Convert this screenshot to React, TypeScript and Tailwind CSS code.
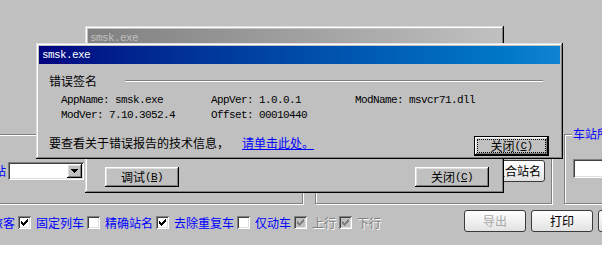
import type { ReactNode } from "react";

const CJK = "font-['Noto_Sans_CJK_SC',sans-serif]";
const MONO = "font-['Liberation_Mono',monospace] text-[11px] tracking-[-0.6px]";
const RAISED = "shadow-[inset_-1px_-1px_0_#000,inset_1px_1px_0_#fff,inset_-2px_-2px_0_#808080,inset_2px_2px_0_#dfdfdf]";
const SUNKEN = "shadow-[inset_1px_1px_0_#808080,inset_-1px_-1px_0_#fff,inset_2px_2px_0_#404040,inset_-2px_-2px_0_#dfdfdf]";
const FRAME = "shadow-[inset_-1px_-1px_0_#000,inset_1px_1px_0_#dfdfdf,inset_-2px_-2px_0_#808080,inset_2px_2px_0_#fff]";
const ETCHED = "border border-[#808080] shadow-[inset_1px_1px_0_#fff,1px_1px_0_#fff]";

// classic 7x7 check glyph, one 3px column per x
function Tick({ color }: { color: string }) {
  const tops = [2, 3, 4, 3, 2, 1, 0];
  return (
    <svg width="7" height="7" viewBox="0 0 7 7" shapeRendering="crispEdges">
      {tops.map((y, x) => (
        <rect key={x} x={x} y={y} width="1" height="3" fill={color} />
      ))}
    </svg>
  );
}

function Check({ checked, disabled }: { checked?: boolean; disabled?: boolean }) {
  return (
    <span
      className={`flex h-[13px] w-[13px] shrink-0 items-center justify-center ${SUNKEN} ${
        disabled ? "bg-[#c0c0c0]" : "bg-white"
      }`}
    >
      {checked && <Tick color={disabled ? "#808080" : "#000"} />}
    </span>
  );
}

function Hotkey({ cn, k }: { cn: string; k: string }) {
  return (
    <span className="flex items-center whitespace-nowrap">
      <span className="leading-[12px]">{cn}</span>
      <span className={MONO}>
        (<span className="underline">{k}</span>)
      </span>
    </span>
  );
}

function WinButton({ children }: { children: ReactNode }) {
  return (
    <div className={`flex h-[20px] w-[74px] items-center justify-center bg-[#c0c0c0] ${RAISED}`}>
      {children}
    </div>
  );
}

function XpButton({ children, dim }: { children: ReactNode; dim?: boolean }) {
  return (
    <div
      className={`flex h-[22px] w-[62px] shrink-0 items-center justify-center rounded-[3px] border border-[#3a3a3a] bg-linear-to-b from-white to-[#e2e2e2] ${
        dim ? "text-[#a8a8a8]" : "text-black"
      }`}
    >
      {children}
    </div>
  );
}

const OPTIONS = [
  { label: "旅客", checked: true },
  { label: "固定列车", checked: true },
  { label: "精确站名", checked: false },
  { label: "去除重复车", checked: true },
  { label: "仅动车", checked: false },
  { label: "上行", checked: true, disabled: true },
  { label: "下行", checked: true, disabled: true },
];

export default function App() {
  return (
    <div className={`relative h-[271px] w-[602px] overflow-hidden bg-white text-[12px] leading-[14px] text-black ${CJK}`}>
      {/* query window underneath */}
      <div className="flex h-[245px] flex-col bg-[#c0c0c0] pt-[134px]">
        <div className="flex h-[70px]">
          <div className={`-ml-[10px] flex w-[313px] shrink-0 items-start ${ETCHED}`}>
            <div className="mt-[27px] flex items-center">
              <span className="-ml-[9px] leading-[18px] text-[#0000ff]">到站</span>
              <div className={`ml-[2px] flex h-[18px] w-[76px] justify-end bg-white p-[2px] ${SUNKEN}`}>
                <div className={`flex h-[14px] w-[15px] items-center justify-center bg-[#c0c0c0] ${RAISED}`}>
                  <svg width="7" height="4" viewBox="0 0 7 4" shapeRendering="crispEdges">
                    <path d="M0 0h7v1H0zM1 1h5v1H1zM2 2h3v1H2zM3 3h1v1H3z" fill="#000" />
                  </svg>
                </div>
              </div>
            </div>
          </div>

          <div className={`ml-[12px] flex w-[237px] shrink-0 items-start justify-end pr-[6px] ${ETCHED}`}>
            <div className="mt-[25px] flex h-[22px] w-[70px] items-center justify-end rounded-[3px] border border-[#3a3a3a] bg-linear-to-b from-white to-[#e2e2e2] pr-[3px]">
              组合站名
            </div>
          </div>

          <div className={`ml-[12px] flex w-[60px] shrink-0 flex-col items-start ${ETCHED}`}>
            <span className="-mt-[8px] ml-[7px] whitespace-nowrap bg-[#c0c0c0] px-[1px] leading-[14px] text-[#0000ff]">
              车站所属局
            </span>
            <div className={`ml-[8px] mt-[18px] h-[19px] w-[60px] shrink-0 bg-white ${SUNKEN}`} />
          </div>
        </div>

        <div className="mt-[6px] flex h-[22px] items-start">
          <div className="-ml-[27px] mt-[6px] flex shrink-0 items-center">
            {OPTIONS.map((o, i) => (
              <div key={o.label} className={`flex items-center ${i > 0 ? "ml-[3px]" : ""}`}>
                <Check checked={o.checked} disabled={o.disabled} />
                <span
                  className={`ml-[5px] whitespace-nowrap leading-[13px] ${
                    o.disabled ? "text-[#808080] [text-shadow:1px_1px_0_#fff]" : "text-[#0000ff]"
                  }`}
                >
                  {o.label}
                </span>
              </div>
            ))}
          </div>
          <div className="ml-[83px] flex shrink-0 gap-[5px]">
            <XpButton dim>导出</XpButton>
            <XpButton>打印</XpButton>
            <XpButton>退出</XpButton>
          </div>
        </div>
      </div>

      {/* inactive error window behind */}
      <div className={`absolute left-[85px] top-[26px] flex h-[167px] w-[419px] flex-col bg-[#c0c0c0] p-[3px] ${FRAME}`}>
        <div className="flex h-[18px] items-center bg-linear-to-r from-[#808080] to-[#c0c0c0] pl-[2px]">
          <span className={`${MONO} text-[#c0c0c0]`}>smsk.exe</span>
        </div>
        <div className="flex-1" />
        <div className="flex justify-between pb-[3px] pl-[17px] pr-[12px]">
          <WinButton>
            <Hotkey cn="调试" k="B" />
          </WinButton>
          <WinButton>
            <Hotkey cn="关闭" k="C" />
          </WinButton>
        </div>
      </div>

      {/* active error window */}
      <div className={`absolute left-[36px] top-[43px] flex h-[116px] w-[527px] flex-col bg-[#c0c0c0] p-[3px] ${FRAME}`}>
        <div className="flex h-[18px] shrink-0 items-center bg-linear-to-r from-[#000080] to-[#1084d0] pl-[3px]">
          <span className={`${MONO} text-white`}>smsk.exe</span>
        </div>

        <div className="mt-[11px] flex h-[12px] items-center pl-[10px] pr-[17px]">
          <span className="leading-[12px]">错误签名</span>
          <div className="ml-[28px] h-[2px] flex-1 border-t border-b border-t-[#808080] border-b-white" />
        </div>

        <div className={`mt-[6px] grid grid-cols-[150px_144px_auto] pl-[22px] leading-[15px] ${MONO}`}>
          <span>AppName: smsk.exe</span>
          <span>AppVer: 1.0.0.1</span>
          <span>ModName: msvcr71.dll</span>
          <span>ModVer: 7.10.3052.4</span>
          <span>Offset: 00010440</span>
          <span />
        </div>

        <div className="mt-[13px] flex items-start pl-[10px] pr-[11px]">
          <span className="mt-[1px] leading-[12px]">要查看关于错误报告的技术信息，</span>
          <span className="ml-[13px] mt-[1px] leading-[12px] text-[#0000ff] underline">请单击此处。</span>
          <div className="ml-auto flex h-[20px] w-[75px] border border-black">
            <div className={`flex flex-1 p-[2px] ${RAISED}`}>
              <div className="flex flex-1 items-center justify-center border border-dotted border-black">
                <Hotkey cn="关闭" k="C" />
              </div>
            </div>
          </div>
        </div>
      </div>
    </div>
  );
}
